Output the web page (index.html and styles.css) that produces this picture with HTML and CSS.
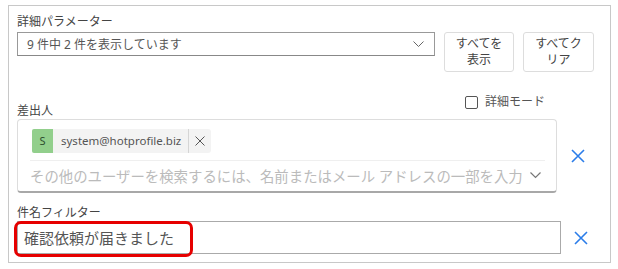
FILE: index.html
```html
<!DOCTYPE html>
<html lang="ja">
<head>
    <meta charset="UTF-8">
    <meta name="viewport" content="width=device-width, initial-scale=1.0">
    <title>詳細パラメーター</title>
    <link rel="stylesheet" href="styles.css">
</head>
<body>
    <div class="panel">
        <div class="param-row">
            <div class="param-main">
                <div class="label">詳細パラメーター</div>
                <div class="select">
                    <span>9 件中 2 件を表示しています</span>
                    <svg class="chevron" width="11" height="7" viewBox="0 0 11 7"><polyline points="0.5,0.5 5.5,5.5 10.5,0.5" fill="none" stroke="#666" stroke-width="1"/></svg>
                </div>
            </div>
            <button class="btn btn-show">すべてを<br>表示</button>
            <button class="btn btn-clear">すべてク<br>リア</button>
        </div>

        <div class="sender-head">
            <div class="label">差出人</div>
            <label class="check"><span class="box"></span>詳細モード</label>
        </div>
        <div class="field-row">
            <div class="picker">
                <div class="chips">
                    <div class="chip">
                        <span class="avatar">S</span>
                        <span class="chip-text">system@hotprofile.biz</span>
                        <span class="chip-remove">
                            <svg width="10" height="10" viewBox="0 0 10 10"><path d="M0.5 0.5 L9.5 9.5 M9.5 0.5 L0.5 9.5" stroke="#555" stroke-width="1"/></svg>
                        </span>
                    </div>
                </div>
                <div class="search">
                    <span>その他のユーザーを検索するには、名前またはメール アドレスの一部を入力</span>
                    <svg class="chevron" width="11" height="7" viewBox="0 0 11 7"><polyline points="0.5,0.5 5.5,5.5 10.5,0.5" fill="none" stroke="#777" stroke-width="1.2"/></svg>
                </div>
            </div>
            <span class="clear-x">
                <svg width="14" height="14" viewBox="0 0 14 14"><path d="M1 1 L13 13 M13 1 L1 13" stroke="#2b7de9" stroke-width="1.6"/></svg>
            </span>
        </div>

        <div class="label subject-label">件名フィルター</div>
        <div class="field-row">
            <div class="text-input">
                <span>確認依頼が届きました</span>
                <div class="highlight"></div>
            </div>
            <span class="clear-x">
                <svg width="14" height="14" viewBox="0 0 14 14"><path d="M1 1 L13 13 M13 1 L1 13" stroke="#2b7de9" stroke-width="1.6"/></svg>
            </span>
        </div>
    </div>
</body>
</html>
```

FILE: styles.css
```css
body { margin: 0; background: #fff; font-family: "Noto Sans", "Noto Sans CJK JP", sans-serif; color: #444; }
.panel { margin: 5px 0 0 8px; width: 593px; height: 247px; border: 1px solid #c8c8c8; padding: 9px 0 0 8px; }
.label { font-size: 12px; line-height: 14px; color: #444; }

.param-row { display: flex; align-items: flex-start; }
.param-main { width: 418px; }
.param-main .label { margin-bottom: 3px; }
.param-row .btn { margin-top: 17px; }
.select { height: 22px; border: 1px solid #999; border-bottom-color: #888; display: flex; align-items: center; justify-content: space-between; padding: 0 10px 0 9px; font-size: 12px; color: #555; }
.btn { width: 70px; height: 40px; margin-left: 9px; background: #fff; border: 1px solid #ddd; border-radius: 3px; font-family: inherit; font-size: 12px; line-height: 16px; color: #444; padding: 0; }
.btn-clear { width: 71px; }

.sender-head { display: flex; justify-content: space-between; align-items: flex-end; width: 528px; margin-top: 23px; margin-bottom: 1px; }
.check { display: flex; align-items: center; font-size: 12px; color: #555; line-height: 14px; margin-bottom: 9px; }
.box { width: 11px; height: 11px; border: 1.5px solid #555; border-radius: 2px; margin-right: 7px; }

.field-row { display: flex; align-items: center; }
.picker { width: 538px; height: 71px; border: 1px solid #ddd; border-bottom: 2px solid #a8a8a8; border-radius: 4px; }
.chips { margin: 0 11px 0 12px; padding: 8px 0 0 2px; height: 41px; box-sizing: border-box; border-bottom: 1px solid #efefef; }
.chip { display: inline-flex; align-items: center; height: 24px; background: #f3f3f3; border-radius: 3px; }
.avatar { width: 21px; height: 24px; background: #92cf8c; color: #2e4d2e; font-size: 11px; display: flex; align-items: center; justify-content: center; border-radius: 2px 0 0 2px; }
.chip-text { font-size: 11.5px; color: #555; padding: 0 7px 0 8px; height: 24px; line-height: 24px; border-right: 1px solid #d5d5d5; }
.chip-remove { width: 22px; display: flex; justify-content: center; }
.search { display: flex; align-items: center; justify-content: space-between; padding: 0 15px 0 12px; height: 29px; font-size: 14.4px; color: #bbb; }
.clear-x { margin-left: 14px; display: flex; }

.subject-label { margin-top: 13px; margin-bottom: 1px; }
.text-input { position: relative; width: 536px; height: 31px; border: 1px solid #aaa; display: flex; align-items: center; padding-left: 6px; font-size: 15px; color: #555; }
.text-input + .clear-x { margin-left: 13px; }
.highlight { position: absolute; left: -4px; top: -1px; width: 173px; height: 30px; border: 3px solid #e60000; border-radius: 7px; }
```
